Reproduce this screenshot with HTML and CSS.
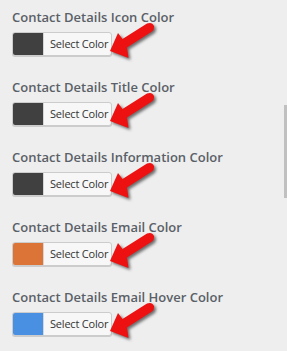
FILE: index.html
```
<!DOCTYPE html>
<html>
<head>
<meta charset="utf-8">
<link rel="stylesheet" href="styles.css">
</head>
<body>
<div class="panel">
  <div class="row">
    <div class="title">Contact Details Icon Color</div>
    <div class="control">
      <button class="picker"><span class="swatch" style="background:#404040"></span><span class="label">Select Color</span></button>
      <svg class="arrow" viewBox="0 0 48 40" width="48" height="40"><path d="M2 31 L10 13 L14.5 19 L39 3.5 Q44 1.5 46 6 Q46.5 9.5 44 11.5 L19 27.5 L20.5 38 Z"/></svg>
    </div>
  </div>
  <div class="row">
    <div class="title">Contact Details Title Color</div>
    <div class="control">
      <button class="picker"><span class="swatch" style="background:#404040"></span><span class="label">Select Color</span></button>
      <svg class="arrow" viewBox="0 0 48 40" width="48" height="40"><path d="M2 31 L10 13 L14.5 19 L39 3.5 Q44 1.5 46 6 Q46.5 9.5 44 11.5 L19 27.5 L20.5 38 Z"/></svg>
    </div>
  </div>
  <div class="row">
    <div class="title">Contact Details Information Color</div>
    <div class="control">
      <button class="picker"><span class="swatch" style="background:#404040"></span><span class="label">Select Color</span></button>
      <svg class="arrow" viewBox="0 0 48 40" width="48" height="40"><path d="M2 31 L10 13 L14.5 19 L39 3.5 Q44 1.5 46 6 Q46.5 9.5 44 11.5 L19 27.5 L20.5 38 Z"/></svg>
    </div>
  </div>
  <div class="row">
    <div class="title">Contact Details Email Color</div>
    <div class="control">
      <button class="picker"><span class="swatch" style="background:#dd7437"></span><span class="label">Select Color</span></button>
      <svg class="arrow" viewBox="0 0 48 40" width="48" height="40"><path d="M2 31 L10 13 L14.5 19 L39 3.5 Q44 1.5 46 6 Q46.5 9.5 44 11.5 L19 27.5 L20.5 38 Z"/></svg>
    </div>
  </div>
  <div class="row">
    <div class="title">Contact Details Email Hover Color</div>
    <div class="control">
      <button class="picker"><span class="swatch" style="background:#4a90e2"></span><span class="label">Select Color</span></button>
      <svg class="arrow" viewBox="0 0 48 40" width="48" height="40"><path d="M2 31 L10 13 L14.5 19 L39 3.5 Q44 1.5 46 6 Q46.5 9.5 44 11.5 L19 27.5 L20.5 38 Z"/></svg>
    </div>
  </div>
  <div class="scrollbar"></div>
</div>
</body>
</html>
```
FILE: styles.css
```
html, body {
  margin: 0;
  padding: 0;
  background: #eeeeee;
}
.panel {
  position: relative;
  width: 287px;
  height: 351px;
  overflow: hidden;
  padding: 7px 0 0 12px;
  box-sizing: border-box;
  display: flex;
  flex-direction: column;
  gap: 21px;
}
.row {
  display: flex;
  flex-direction: column;
  gap: 5px;
}
.title {
  font-family: "Open Sans", sans-serif;
  font-weight: 600;
  font-size: 13px;
  line-height: 20px;
  color: #5a6067;
  white-space: nowrap;
}
.control {
  position: relative;
  height: 24px;
}
.picker {
  display: flex;
  align-items: stretch;
  height: 24px;
  width: 100px;
  padding: 0;
  margin: 0;
  border: 1px solid #cccccc;
  border-radius: 3px;
  background: #f7f7f7;
  box-shadow: 0 1px 0 #cccccc;
  box-sizing: border-box;
  overflow: hidden;
}
.swatch {
  width: 30px;
  flex: none;
}
.label {
  flex: 1;
  font-family: "Open Sans", sans-serif;
  font-size: 11px;
  letter-spacing: -0.2px;
  line-height: 22px;
  color: #333333;
  text-align: left;
  padding-left: 6px;
  border-left: 1px solid #d5d5d5;
  white-space: nowrap;
}
.arrow {
  position: absolute;
  left: 96px;
  top: -12px;
  fill: #ee1111;
  filter: drop-shadow(2px 2px 1.5px rgba(0,0,0,0.55));
}
.scrollbar {
  position: absolute;
  left: 284px;
  top: 105px;
  width: 3px;
  height: 93px;
  background: #c0c0c0;
}
```
